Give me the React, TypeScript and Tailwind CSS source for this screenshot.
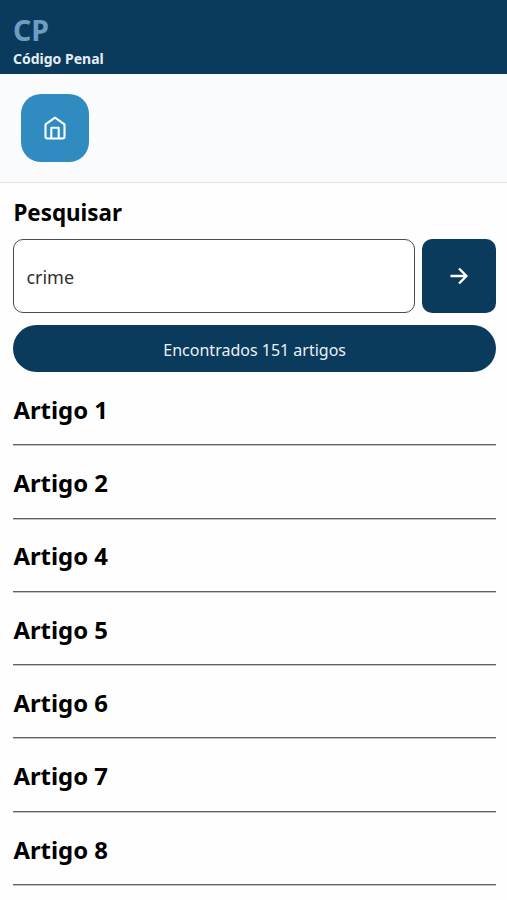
const articles = [1, 2, 4, 5, 6, 7, 8];

function HomeIcon() {
  return (
    <svg width="22" height="24" viewBox="0 0 22 24" fill="none" stroke="currentColor" strokeWidth="2.1" strokeLinejoin="round">
      <path d="M11 1.7 L1.5 8.3 V20.5 A2 2 0 0 0 3.5 22.5 H18.5 A2 2 0 0 0 20.5 20.5 V8.3 Z" />
      <path d="M7.3 22.3 V11.7 H14.7 V22.3" />
    </svg>
  );
}

function ArrowIcon() {
  return (
    <svg width="18" height="18" viewBox="0 0 18 18" fill="none" stroke="currentColor" strokeWidth="2.4" strokeLinejoin="round">
      <path d="M0.5 9 H16 M9 1.5 L16.5 9 L9 16.5" />
    </svg>
  );
}

export default function App() {
  return (
    <div className="h-[900px] w-[507px] overflow-hidden bg-[#fefefe] font-['Noto_Sans','Open_Sans',sans-serif] text-black">
      <header className="flex h-[74px] flex-col bg-[#0b3b5c] pt-3.5 pl-[13px]">
        <h1 className="h-8 text-[28.5px] leading-8 font-bold text-[#6c9dc3]">CP</h1>
        <p className="h-6 text-[14px] leading-[25px] font-bold text-[#e4edf4]">Código Penal</p>
      </header>
      <nav className="h-[109px] border-b border-[#dfe5e9] bg-[#f9fbfd] pt-[19.5px] pl-[20.5px]">
        <button className="flex size-[68.5px] items-center justify-center rounded-[20px] bg-[#308bc0] pt-px text-white" aria-label="Início">
          <HomeIcon />
        </button>
      </nav>
      <main className="pr-[11px] pl-[13.4px]">
        <h2 className="h-14 pt-3.5 text-[22.4px] leading-8 font-bold">Pesquisar</h2>
        <div className="flex h-[74px] gap-[7px]">
          <input
            className="w-[402px] rounded-[10px] border border-[#4b4b4b] bg-white px-3 pt-0.5 text-[18px] text-[#303030] outline-none"
            defaultValue="crime"
          />
          <button className="flex w-[73.5px] items-center justify-center rounded-[10px] bg-[#0b3b5c] text-white" aria-label="Pesquisar">
            <ArrowIcon />
          </button>
        </div>
        <div className="mt-3 flex h-[47px] items-center justify-center rounded-full bg-[#0b3b5c] pt-0.5 text-[16px] text-[#e8f0f6]">
          Encontrados 151 artigos
        </div>
        <ul>
          {articles.map((n) => (
            <li key={n} className="h-[73.3px] border-b border-[#606060] pt-[21.8px] text-[23.9px] leading-8 font-bold shadow-[0_1px_0_#c4c4c4]">
              Artigo {n}
            </li>
          ))}
        </ul>
      </main>
    </div>
  );
}
